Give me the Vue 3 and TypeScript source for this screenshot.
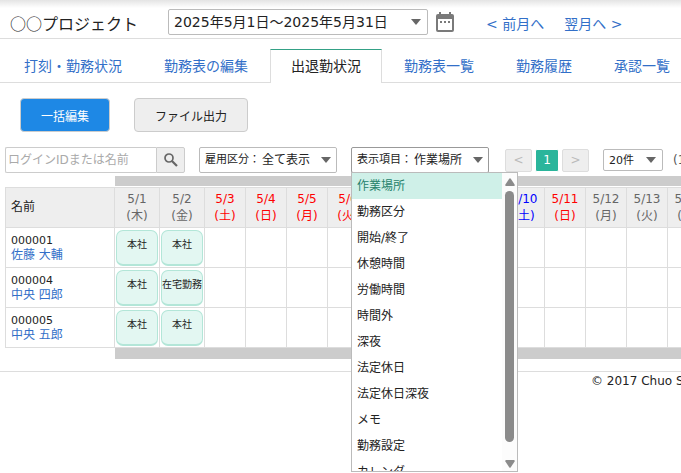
<script setup lang="ts">
import { ref } from 'vue'

interface Day {
  date: string
  dow: string
  kind: 'work' | 'off' | 'sat'
  width: number
}

const tabs: string[] = ['打刻・勤務状況', '勤務表の編集', '出退勤状況', '勤務表一覧', '勤務履歴', '承認一覧']
const activeTab = ref('出退勤状況')

const items: string[] = [
  '作業場所', '勤務区分', '開始/終了', '休憩時間', '労働時間', '時間外',
  '深夜', '法定休日', '法定休日深夜', 'メモ', '勤務設定', 'カレンダ',
]
const selected = ref('作業場所')
const menuOpen = ref(true)

const days: Day[] = [
  { date: '5/1', dow: '木', kind: 'work', width: 45 },
  { date: '5/2', dow: '金', kind: 'work', width: 45 },
  { date: '5/3', dow: '土', kind: 'off', width: 41 },
  { date: '5/4', dow: '日', kind: 'off', width: 41 },
  { date: '5/5', dow: '月', kind: 'off', width: 41 },
  { date: '5/6', dow: '火', kind: 'off', width: 41 },
  { date: '5/7', dow: '水', kind: 'work', width: 45 },
  { date: '5/8', dow: '木', kind: 'work', width: 45 },
  { date: '5/9', dow: '金', kind: 'work', width: 45 },
  { date: '5/10', dow: '土', kind: 'sat', width: 41 },
  { date: '5/11', dow: '日', kind: 'off', width: 41 },
  { date: '5/12', dow: '月', kind: 'work', width: 41 },
  { date: '5/13', dow: '火', kind: 'work', width: 41 },
  { date: '5/14', dow: '水', kind: 'work', width: 41 },
]

const people = [
  { id: '000001', name: '佐藤 大輔', places: ['本社', '本社'] },
  { id: '000004', name: '中央 四郎', places: ['本社', '在宅勤務'] },
  { id: '000005', name: '中央 五郎', places: ['本社', '本社'] },
]

function choose(item: string) {
  selected.value = item
  menuOpen.value = false
}
</script>

<template>
  <div class="page">
    <header class="top">
      <h1 class="title">○○プロジェクト</h1>
      <select class="period" aria-label="期間">
        <option>2025年5月1日～2025年5月31日</option>
      </select>
      <button class="cal" type="button" aria-label="カレンダー">
        <svg width="18" height="20" viewBox="0 0 18 20">
          <path fill="#7a7a7a" fill-rule="evenodd" d="M3 0h2v2h8V0h2v2h1a2 2 0 0 1 2 2v14a2 2 0 0 1-2 2H2a2 2 0 0 1-2-2V4a2 2 0 0 1 2-2h1zM2 7v11h14V7zM4 9h2v2H4zM8 9h2v2H8zM12 9h2v2h-2z" />
        </svg>
      </button>
      <nav class="months">
        <a href="#">&lt; 前月へ</a>
        <a href="#">翌月へ &gt;</a>
      </nav>
    </header>

    <nav class="tabs">
      <a v-for="t in tabs" :key="t" href="#" class="tab" :class="{ active: t === activeTab }" @click.prevent="activeTab = t">{{ t }}</a>
    </nav>

    <div class="actions">
      <button type="button" class="btn primary">一括編集</button>
      <button type="button" class="btn">ファイル出力</button>
    </div>

    <div class="filters">
      <form class="search" @submit.prevent>
        <input type="text" placeholder="ログインIDまたは名前" aria-label="ログインIDまたは名前" />
        <button type="submit" aria-label="検索">
          <svg width="14" height="14" viewBox="0 0 14 14" fill="none" stroke="#666">
            <circle cx="5" cy="5" r="4" stroke-width="1.7" />
            <path d="M8 8l5 5" stroke-width="2.2" />
          </svg>
        </button>
      </form>

      <div class="combo">
        <label for="employment">雇用区分：</label>
        <select id="employment"><option>全て表示</option></select>
      </div>

      <div class="combo open">
        <label for="column">表示項目：</label>
        <select id="column" v-model="selected" @mousedown.prevent="menuOpen = !menuOpen">
          <option v-for="i in items" :key="i">{{ i }}</option>
        </select>
        <div v-if="menuOpen" class="menu">
          <ul class="list" role="listbox" aria-label="表示項目">
            <li v-for="i in items" :key="i" role="option" :aria-selected="i === selected" :class="{ on: i === selected }" @click="choose(i)">{{ i }}</li>
          </ul>
          <div class="bar">
            <svg width="10" height="8" viewBox="0 0 10 8"><path fill="#8b8b8b" d="M4.2.8a1 1 0 0 1 1.6 0L9.6 6.5Q10 8 8.8 8H1.2Q0 8 .4 6.5z" /></svg>
            <span class="thumb"></span>
            <svg width="10" height="8" viewBox="0 0 10 8"><path fill="#8b8b8b" d="M4.2 7.2a1 1 0 0 0 1.6 0L9.6 1.5Q10 0 8.8 0H1.2Q0 0 .4 1.5z" /></svg>
          </div>
        </div>
      </div>

      <nav class="pager" aria-label="ページ">
        <button type="button" disabled>&lt;</button>
        <button type="button" class="current">1</button>
        <button type="button" disabled>&gt;</button>
      </nav>
      <select class="size" aria-label="表示件数"><option>20件</option></select>
      <span class="count">(1</span>
    </div>

    <main class="sheet">
      <div class="strip"></div>
      <table>
        <colgroup>
          <col class="name-col" />
          <col v-for="d in days" :key="d.date" :style="{ width: d.width + 'px' }" />
        </colgroup>
        <thead>
          <tr>
            <th class="who" scope="col">名前</th>
            <th v-for="d in days" :key="d.date" scope="col" :class="d.kind">{{ d.date }}<br />({{ d.dow }})</th>
          </tr>
        </thead>
        <tbody>
          <tr v-for="p in people" :key="p.id">
            <td class="person">
              <div class="pid">{{ p.id }}</div>
              <a href="#">{{ p.name }}</a>
            </td>
            <td v-for="(d, n) in days" :key="d.date">
              <button v-if="p.places[n]" type="button" class="chip">{{ p.places[n] }}</button>
            </td>
          </tr>
        </tbody>
      </table>
      <div class="strip bottom"></div>
    </main>

    <footer>© 2017 Chuo S</footer>
  </div>
</template>

<style>
body {
  background: #fff;
}
</style>

<style scoped>
.page {
  font: 12px/16px "DejaVu Sans", "Noto Sans CJK JP", sans-serif;
  color: #222;
  overflow: hidden;
  min-height: 100vh;
}
* {
  box-sizing: border-box;
}
button,
input,
select {
  font-family: inherit;
  color: inherit;
  margin: 0;
}
a {
  color: #326fc8;
  text-decoration: none;
}
select {
  appearance: none;
  background: #fff url("data:image/svg+xml,%3Csvg xmlns='http://www.w3.org/2000/svg' width='10' height='6'%3E%3Cpath d='M0 0h10L5 6z' fill='%23666'/%3E%3C/svg%3E") no-repeat right 6px center;
  border: 1px solid #bbb;
  border-radius: 2px;
}
.top {
  display: flex;
  align-items: center;
  height: 39px;
  padding: 6px 0 0 10px;
  border-bottom: 1px solid #ddd;
  background: linear-gradient(#e4e4e4, #fff 8px);
  white-space: nowrap;
}
.title {
  flex: none;
  width: 158px;
  margin: 0;
  padding-top: 2px;
  font: 400 16px/24px "Noto Sans CJK JP", sans-serif;
}
.period {
  flex: none;
  width: 260px;
  height: 26px;
  padding: 0 5px;
  font-size: 14px;
}
.cal {
  flex: none;
  display: flex;
  margin-left: 8px;
  padding: 0;
  border: 0;
  background: none;
}
.months {
  display: flex;
  gap: 20px;
  margin-left: 32px;
  padding-top: 4px;
  font-size: 14px;
  line-height: 20px;
}
.tabs {
  display: flex;
  padding: 10px 0 0 3px;
  height: 44px;
  box-shadow: inset 0 -1px #ddd;
  white-space: nowrap;
}
.tab {
  flex: none;
  padding: 0 20px;
  border: 1px solid transparent;
  border-bottom: 0;
  font-size: 14px;
  line-height: 32px;
}
.tab.active {
  margin: 0 1px;
  color: #222;
  background: #fff;
  border-color: #34a186 #ddd transparent;
}
.actions {
  display: flex;
  gap: 24px;
  padding: 15px 20px;
}
.btn {
  height: 34px;
  padding: 0 20px;
  border: 1px solid #ccc;
  border-radius: 4px;
  background: #eee;
  font-size: 12px;
}
.btn.primary {
  color: #fff;
  background: #1e88e5;
}
.filters {
  display: flex;
  align-items: center;
  gap: 14px;
  height: 26px;
  padding-left: 5px;
  white-space: nowrap;
}
.filters > * {
  flex: none;
}
.search {
  display: flex;
  height: 26px;
}
.search input {
  width: 151px;
  padding: 0 2px;
  border: 1px solid #ccc;
  border-right: 0;
  border-radius: 2px 0 0 2px;
  font-size: 12px;
}
.search input::placeholder {
  color: #aaa;
}
.search button {
  display: flex;
  align-items: center;
  justify-content: center;
  width: 29px;
  padding: 0;
  border: 1px solid #ccc;
  border-radius: 0 2px 2px 0;
  background: #eee;
}
.combo {
  position: relative;
  display: flex;
  align-items: center;
  width: 138px;
  height: 26px;
  padding-left: 5px;
  border: 1px solid #bbb;
  border-radius: 2px;
}
.combo label {
  font-size: 11px;
}
.combo select {
  flex: 1;
  min-width: 0;
  height: 24px;
  padding: 0 0 0 2px;
  border: 0;
  background-position: right 5px center;
  font-size: 12px;
}
.combo.open {
  border-color: #999;
}
.menu {
  position: absolute;
  z-index: 2;
  top: 24px;
  left: -1px;
  display: flex;
  width: 167px;
  height: 300px;
  border: 1px solid #bbb;
  background: #fff;
}
.list {
  flex: 1;
  margin: 0;
  padding: 0;
  overflow: hidden;
  list-style: none;
}
.list li {
  padding-left: 5px;
  line-height: 26px;
}
.list .on {
  color: #26826b;
  background: #cff0e8;
}
.bar {
  display: flex;
  flex-direction: column;
  align-items: center;
  gap: 5px;
  width: 15px;
  padding: 5px 0 3px;
  background: #fcfcfc;
}
.bar svg {
  flex: none;
}
.thumb {
  flex: 1;
  width: 9px;
  margin-bottom: 13px;
  border-radius: 5px;
  background: #8b8b8b;
}
.pager {
  display: flex;
  gap: 3px;
  margin-left: 2px;
}
.pager button {
  width: 27px;
  height: 23px;
  padding: 0;
  border: 1px solid #ddd;
  border-radius: 2px;
  background: #eee;
  color: #bbb;
  font-size: 12px;
}
.pager .current {
  width: 24px;
  border-color: #fff;
  background: #2ab59b;
  color: #fff;
}
.size {
  width: 60px;
  height: 22px;
  padding: 0 5px;
  font-size: 11px;
}
.count {
  margin-left: -4px;
  color: #555;
}
.sheet {
  padding: 3px 0 0 5px;
  overflow: hidden;
}
.strip {
  height: 10px;
  margin: 0 0 1px 110px;
  background: #ccc;
}
.strip.bottom {
  height: 11px;
  margin-bottom: 0;
}
table {
  width: 703px;
  table-layout: fixed;
  border-collapse: collapse;
}
.name-col {
  width: 109px;
}
th,
td {
  height: 40px;
  padding: 0;
  border: 1px solid #ddd;
}
th {
  background: #eee;
  color: #666;
  font-weight: 400;
  line-height: 17px;
  text-align: center;
}
th.who {
  padding-left: 5px;
  color: #222;
  text-align: left;
}
th.off {
  color: #f00;
}
th.sat {
  color: #00f;
}
.person {
  padding-left: 5px;
  line-height: 14px;
}
.pid {
  font-size: 11px;
}
.chip {
  display: block;
  width: 42px;
  height: 36px;
  margin: 0 auto;
  padding: 0 0 8px;
  border: 1px solid #b3e6d8;
  border-bottom-width: 2px;
  border-radius: 7px;
  background: #e3f7f2;
  font-size: 10px;
  white-space: nowrap;
}
footer {
  margin-top: 12px;
  padding: 1px 0 0 591px;
  border-top: 1px solid #ddd;
  white-space: nowrap;
}
</style>
